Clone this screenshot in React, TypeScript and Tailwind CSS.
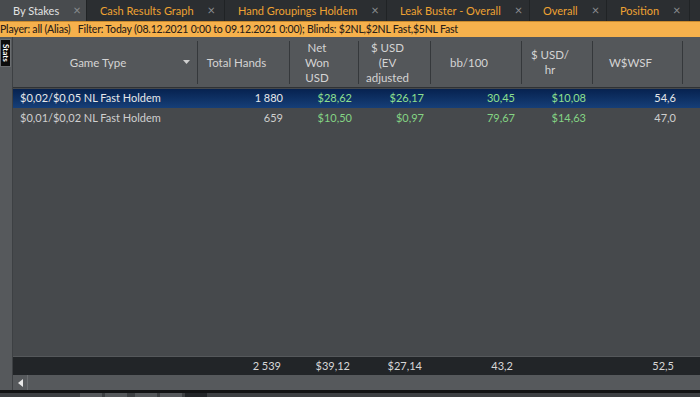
import React from "react";

const font = { fontFamily: 'Lato, "Noto Sans", sans-serif' };

const tabs = [
  { label: "By Stakes", w: "w-[87px]", active: true },
  { label: "Cash Results Graph", w: "w-[138px]" },
  { label: "Hand Groupings Holdem", w: "w-[162px]" },
  { label: "Leak Buster - Overall", w: "w-[143px]" },
  { label: "Overall", w: "w-[77px]" },
  { label: "Position", w: "w-[83px]" },
];

const colW = ["w-[185px]", "w-[92px]", "w-[69px]", "w-[72px]", "w-[91px]", "w-[71px]", "w-[90px]"];

const headers: string[][] = [
  ["Game Type"],
  ["Total Hands"],
  ["Net", "Won", "USD"],
  ["$ USD", "(EV", "adjusted"],
  ["bb/100"],
  ["$ USD/", "hr"],
  ["W$WSF"],
];

type Cell = { t: string; c?: "g" | "w" };
const rows: Cell[][] = [
  [
    { t: "$0,02/$0,05 NL Fast Holdem" },
    { t: "1 880" },
    { t: "$28,62", c: "g" },
    { t: "$26,17", c: "g" },
    { t: "30,45", c: "g" },
    { t: "$10,08", c: "g" },
    { t: "54,6" },
  ],
  [
    { t: "$0,01/$0,02 NL Fast Holdem" },
    { t: "659" },
    { t: "$10,50", c: "g" },
    { t: "$0,97", c: "g" },
    { t: "79,67", c: "g" },
    { t: "$14,63", c: "g" },
    { t: "47,0" },
  ],
];

const totals = ["", "2 539", "$39,12", "$27,14", "43,2", "", "52,5"];

export default function App() {
  return (
    <div className="w-[700px] h-[397px] overflow-hidden flex flex-col bg-[#46494c] text-[11px]" style={font}>
      {/* Tabs */}
      <div className="h-[21px] flex bg-[#2b2e31] shrink-0">
        {tabs.map((t) => (
          <div
            key={t.label}
            className={`${t.w} h-full flex items-center pl-[13px] gap-[14px] border-r border-[#202325] shrink-0 text-[11px] ${
              t.active ? "bg-[#484b4e] text-[#e2e2e2]" : "text-[#eea232]"
            }`}
          >
            <span className="whitespace-nowrap leading-none">{t.label}</span>
            <span className="text-[#8a8d90] text-[13px] leading-none">×</span>
          </div>
        ))}
        <div className="flex-1" />
      </div>
      {/* Filter bar */}
      <div className="h-[16px] bg-[#f6b14c] text-[#2a2118] text-[10.5px] font-medium tracking-[-0.2px] flex items-center whitespace-nowrap shrink-0 border-t border-[#c98a2e]">
        <span>Player: all (Alias)&nbsp;&nbsp; Filter: Today (08.12.2021 0:00 to 09.12.2021 0:00); Blinds: $2NL,$2NL Fast,$5NL Fast</span>
      </div>
      {/* Main */}
      <div className="flex-1 flex min-h-0">
        {/* sidebar */}
        <div className="w-[13px] bg-[#56595c] shrink-0 pt-[2px] border-r border-[#3d4043]">
          <div className="w-[11px] h-[28px] bg-[#0c0c0c] border border-[#6a6d70] flex items-center justify-center">
            <span
              className="text-white text-[8px] font-bold leading-none"
              style={{ writingMode: "vertical-rl" }}
            >
              Stats
            </span>
          </div>
        </div>
        {/* grid */}
        <div className="flex-1 flex flex-col min-w-0">
          {/* header */}
          <div className="h-[51px] flex bg-[#54575a] border-b border-[#2f3235] shrink-0">
            {headers.map((h, i) => (
              <div
                key={i}
                className={`${colW[i]} shrink-0 h-full relative flex items-center justify-center pr-[15px] text-[#d4d4d4] text-[11.5px] leading-[15px] text-center`}
              >
                <div className="flex flex-col items-center">
                  {h.map((l) => (
                    <span key={l} className="whitespace-nowrap">
                      {l}
                    </span>
                  ))}
                </div>
                {i === 0 && (
                  <svg className="absolute right-[8px] top-[23px]" width="7" height="4" viewBox="0 0 7 4">
                    <path d="M0 0 L7 0 L3.5 4 Z" fill="#cfcfcf" />
                  </svg>
                )}
                <div className="absolute right-0 top-[4px] bottom-[3px] w-px bg-[#35383b]" />
              </div>
            ))}
            <div className="flex-1" />
          </div>
          {/* rows */}
          <div className="flex-1 flex flex-col bg-[#46494c] pt-px">
            {rows.map((r, ri) => (
              <div
                key={ri}
                className={`h-[19px] flex items-center shrink-0 ${
                  ri === 0 ? "bg-gradient-to-b from-[#072250] to-[#163f78]" : "mt-[1px]"
                }`}
              >
                {r.map((c, ci) => (
                  <div
                    key={ci}
                    className={`${colW[ci]} shrink-0 whitespace-nowrap ${
                      ci === 0 ? "pl-[7px] text-left" : "pr-[7px] text-right"
                    } ${
                      c.c === "g"
                        ? ri === 0
                          ? "text-[#8fe08f]"
                          : "text-[#84d484]"
                        : ri === 0
                        ? "text-[#e6e8ea]"
                        : "text-[#cfcfcf]"
                    }`}
                  >
                    {c.t}
                  </div>
                ))}
              </div>
            ))}
          </div>
          {/* totals */}
          <div className="h-[19px] flex items-center bg-[#222528] border-t border-[#55585b] shrink-0 text-[#d8d8d8]">
            {totals.map((t, i) => (
              <div key={i} className={`${colW[i]} shrink-0 text-right pr-[9px] whitespace-nowrap`}>
                {t}
              </div>
            ))}
          </div>
          {/* scrollbar */}
          <div className="h-[15px] flex bg-[#56595c] shrink-0">
            <div className="w-[15px] h-full flex items-center justify-center border-r border-[#6b6e71]">
              <svg width="5" height="8" viewBox="0 0 5 8">
                <path d="M5 0 L5 8 L0 4 Z" fill="#e8e8e8" />
              </svg>
            </div>
          </div>
        </div>
      </div>
      {/* bottom strip */}
      <div className="h-[3px] bg-[#111213] shrink-0" />
      <div className="h-[4px] bg-[#3c3f42] shrink-0 flex">
        <div className="w-[80px]" />
        <div className="w-[22px] bg-[#55585b]" />
        <div className="w-[3px]" />
        <div className="w-[22px] bg-[#55585b]" />
        <div className="w-[8px]" />
        <div className="w-[22px] bg-[#55585b]" />
        <div className="w-[3px]" />
        <div className="w-[22px] bg-[#55585b]" />
        <div className="w-[3px]" />
        <div className="w-[22px] bg-[#222528]" />
      </div>
    </div>
  );
}
